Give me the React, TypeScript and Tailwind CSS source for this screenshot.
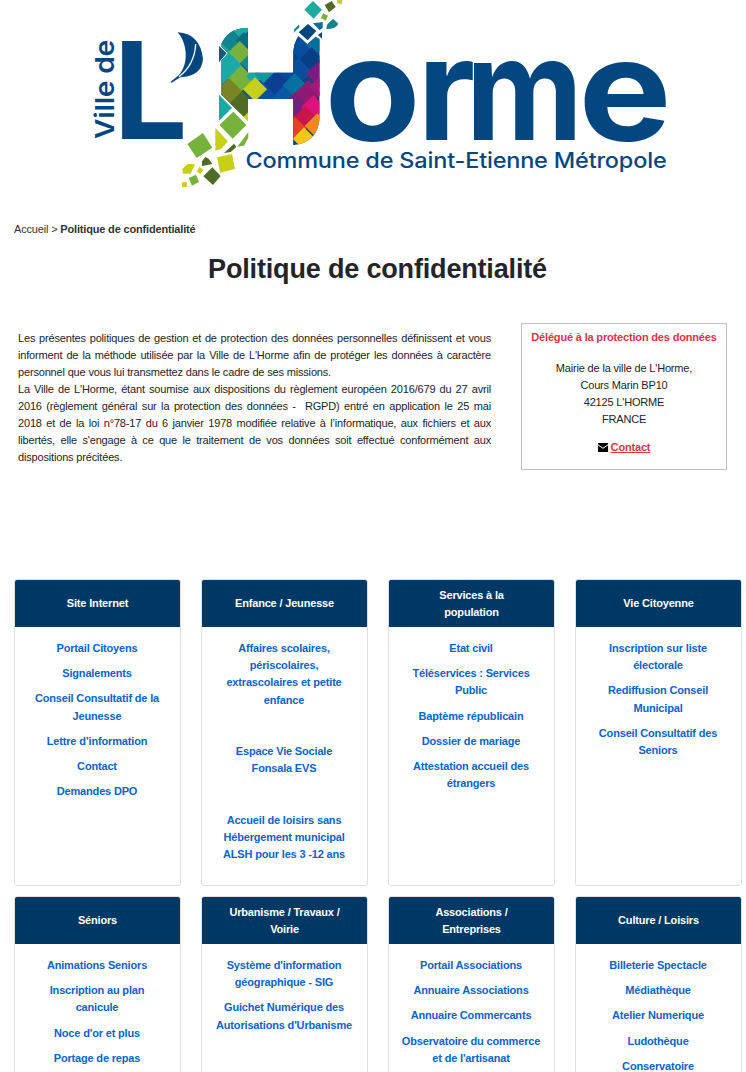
type Tile = [number, number, number, string];

const tiles: Tile[] = [
  [482, 80, 36, '#1fa9a0'],
  [448, 122, 38, '#12858f'],
  [492, 122, 26, '#0b6d7f'],
  [425, 160, 30, '#1fa9a0'],
  [508, 180, 36, '#128a94'],
  [479, 157, 34, '#77b23c'],
  [445, 196, 40, '#1aaaa3'],
  [425, 225, 30, '#1aaaa3'],
  [483, 236, 40, '#77b23c'],
  [447, 274, 40, '#7a8424'],
  [486, 314, 40, '#4f6b26'],
  [505, 358, 22, '#c5d016'],
  [524, 229, 26, '#1aaaa3'],
  [555, 222, 32, '#12969b'],
  [590, 250, 40, '#0c3f92'],
  [560, 297, 34, '#0a4f9f'],
  [525, 268, 36, '#c5d016'],
  [622, 214, 34, '#064a94'],
  [612, 290, 34, '#0a57a4'],
  [668, 145, 40, '#064f9c'],
  [708, 130, 34, '#046f9c'],
  [664, 205, 40, '#0a4d9e'],
  [695, 178, 36, '#063f86'],
  [722, 222, 44, '#7d1c80'],
  [644, 256, 36, '#0570a0'],
  [648, 316, 42, '#74207f'],
  [685, 280, 40, '#8f1a72'],
  [716, 262, 30, '#a5177a'],
  [700, 322, 36, '#e0117c'],
  [675, 354, 36, '#c9154b'],
  [645, 385, 34, '#e5431f'],
  [712, 378, 38, '#f08a1c'],
  [672, 416, 34, '#fcc51a'],
];

const shards: [string, string][] = [
  ['699,3 726,29 701,56 673,29', '#1fa9a0'],
  ['734,15 755,3 767,21 747,37', '#4f6b26'],
  ['771,0 787,0 786,13 771,9', '#c5d016'],
  ['729,40 744,47 737,62 723,54', '#77b23c'],
  ['684,72 709,93 683,121 656,97', '#044780'],
  ['657,73 658,82 641,98 643,88', '#12858f'],
  ['699,70 728,66 728,84 718,90', '#046f9c'],
  ['714,105 726,96 726,116', '#044780'],
  ['417,138 440,160 417,187', '#0b5d76'],
  ['417,284 456,324 417,362', '#1aaaa3'],
  ['460,335 499,375 458,416 418,375', '#77b23c'],
  ['406,384 444,424 424,446 406,452', '#c5d016'],
  ['369,399 397,443 350,474 322,432', '#77b23c'],
  ['505,396 505,413 492,437 472,440', '#77b23c'],
  ['462,431 469,441 452,456 432,459', '#4f6b26'],
  ['376,471 386,476 397,492 366,498 366,484', '#4f6b26'],
  ['411,472 456,462 465,507 420,518', '#c5d016'],
  ['397,502 422,528 399,555 370,529', '#4f6b26'],
  ['358,500 370,509 362,522 350,515', '#c5d016'],
  ['345,493 332,521 309,521 307,506 323,492', '#c5d016'],
  ['326,534 348,524 357,545 336,557', '#77b23c'],
  ['306,547 320,546 322,560 306,562', '#c5d016'],
];

function Logo() {
  return (
    <svg className="block h-[200px] w-[746px] shrink-0" viewBox="0 0 746 200" role="img" aria-label="Ville de L'Horme">
      <defs>
        <clipPath id="mosaic">
          <path d="M424 300V182L444 160L422 137Q442 83 504 83V218H640V158Q642 128 655 108L682 133L707 110L719 118V355Q712 430 640 435V297H504V362L424 284Z" />
        </clipPath>
      </defs>
      <g fill="#044780" className="[font-family:Inter,sans-serif]">
        <text transform="translate(113.5 139) rotate(-90)" fontSize="26" fontWeight="600" textLength="99" lengthAdjust="spacingAndGlyphs">Ville de</text>
        <text transform="translate(113.5 139) scale(.97 1)" fontSize="135" fontWeight="700">L</text>
        <text transform="translate(324.400 139.5) scale(1.105 1)" fontSize="142" fontWeight="700">o</text>
        <text transform="translate(417.5 139.500)" fontSize="142" fontWeight="700">r</text>
        <text transform="translate(466 139.5) scale(.9 1)" fontSize="142" fontWeight="700">m</text>
        <text transform="translate(578.5 139.5) scale(1.1 1)" fontSize="142" fontWeight="700">e</text>
        <text x="245.500" y="168" fontSize="21" fontWeight="450" textLength="421" lengthAdjust="spacingAndGlyphs">Commune de Saint-Etienne Métropole</text>
      </g>
      <g transform="translate(80 0) scale(.33333)">
        <path fill="#044780" d="M293 97Q360 100 369 177Q365 229 301 232L275 248L271 246L296 226C325 195 325 135 293 97Z" />
        <path d="M347 132Q344 194 297 230" fill="none" stroke="#fff" strokeWidth="4" />
        <g clipPath="url(#mosaic)">
          <rect x="415" y="70" width="230" height="380" fill="#0c55a0" />
          <rect x="638" y="70" width="90" height="380" fill="#044780" />
          {tiles.map(([x, y, r, c]) => (
            <polygon key={`${x}-${y}`} fill={c} points={`${x},${y - r} ${x + r},${y} ${x},${y + r} ${x - r},${y}`} />
          ))}
        </g>
        {shards.map(([points, c]) => (
          <polygon key={points} points={points} fill={c} />
        ))}
        <path d="M739 87Q738 70 760 57L775 71Q768 87 739 87Z" fill="#12858f" />
      </g>
    </svg>
  );
}

type Section = { title: string[]; links: string[][] };

const sections: Section[] = [
  { title: ['Site Internet'], links: [['Portail Citoyens'], ['Signalements'], ['Conseil Consultatif de la', 'Jeunesse'], ['Lettre d’information'], ['Contact'], ['Demandes DPO']] },
  { title: ['Enfance / Jeunesse'], links: [['Affaires scolaires,', 'périscolaires,', 'extrascolaires et petite', 'enfance', '', '', 'Espace Vie Sociale', 'Fonsala EVS', '', '', 'Accueil de loisirs sans', 'Hébergement municipal', 'ALSH pour les 3 -12 ans']] },
  { title: ['Services à la', 'population'], links: [['Etat civil'], ['Téléservices : Services', 'Public'], ['Baptème républicain'], ['Dossier de mariage'], ['Attestation accueil des', 'étrangers']] },
  { title: ['Vie Citoyenne'], links: [['Inscription sur liste', 'électorale'], ['Rediffusion Conseil', 'Municipal'], ['Conseil Consultatif des', 'Seniors']] },
  { title: ['Séniors'], links: [['Animations Seniors'], ['Inscription au plan', 'canicule'], ["Noce d'or et plus"], ['Portage de repas']] },
  { title: ['Urbanisme / Travaux /', 'Voirie'], links: [["Système d'information", 'géographique - SIG'], ['Guichet Numérique des', "Autorisations d'Urbanisme"]] },
  { title: ['Associations /', 'Entreprises'], links: [['Portail Associations'], ['Annuaire Associations'], ['Annuaire Commercants'], ['Observatoire du commerce', "et de l'artisanat"]] },
  { title: ['Culture / Loisirs'], links: [['Billeterie Spectacle'], ['Médiathèque'], ['Atelier Numerique'], ['Ludothèque'], ['Conservatoire']] },
];

function Lines({ lines }: { lines: string[] }) {
  return (
    <>
      {lines.map((l, i) => (
        <span key={i} className="block h-[17.17px] whitespace-nowrap">{l}</span>
      ))}
    </>
  );
}

function Card({ title, links }: Section) {
  return (
    <section className="h-[307px] overflow-hidden rounded-[3px] border border-[#dfdfdf] text-center font-bold leading-[17.17px]">
      <h2 className="flex h-[47px] flex-col justify-center bg-[#003865] pt-[0.6px] text-white">
        <Lines lines={title} />
      </h2>
      <ul className="flex flex-col gap-2 pr-px pt-[13.1px] text-[#0b63ce]">
        {links.map((l) => (
          <li key={l[0]}>
            <a href="#"><Lines lines={l} /></a>
          </li>
        ))}
      </ul>
    </section>
  );
}

export default function App() {
  return (
    <div className="flex h-[1072px] w-[746px] flex-col overflow-hidden bg-white text-[11px] leading-[17px] tracking-[-0.17px] text-[#212529] [font-family:'Liberation_Sans',Arial,sans-serif]">
      <Logo />
      <nav className="shrink-0 pl-[14px] pt-[21px] text-[#333]">
        <a href="#">Accueil</a> &gt; <b>Politique de confidentialité</b>
      </nav>
      <h1 className="mt-[14px] shrink-0 pl-[9px] text-center text-[27px] font-bold leading-[34px]">Politique de confidentialité</h1>
      <main className="mt-[37px] flex h-[256px] shrink-0 items-start">
        <div className="ml-[18px] mt-[7px] w-[473px] text-justify">
          <p>
            Les présentes politiques de gestion et de protection des données personnelles définissent et vous informent de la méthode utilisée par la Ville de L'Horme afin de protéger les données à caractère personnel que vous lui transmettez dans le cadre de ses missions.
          </p>
          <p>
            La Ville de L'Horme, étant soumise aux dispositions du règlement européen 2016/679 du 27 avril 2016 (règlement général sur la protection des données -&nbsp; RGPD) entré en application le 25 mai 2018 et de la loi n°78-17 du 6 janvier 1978 modifiée relative à l’informatique, aux fichiers et aux libertés, elle s'engage à ce que le traitement de vos données soit effectué conformément aux dispositions précitées.
          </p>
        </div>
        <aside className="ml-[30px] h-[147px] w-[206px] border border-[#bfbfbf] pt-[5px] text-center">
          <h2 className="whitespace-nowrap font-bold text-[#dc3545]">Délégué à la protection des données</h2>
          <address className="mt-[14px] not-italic">
            Mairie de la ville de L'Horme,<br />Cours Marin BP10<br />42125 L'HORME<br />FRANCE
          </address>
          <a href="#" className="mt-[11px] flex items-center justify-center gap-[3px] font-bold text-[#dc3545]">
            <svg className="h-[9px] w-[10px]" viewBox="0 0 10 9">
              <path fill="#000" d="M0 0H10V9H0Z" />
              <path d="M0 1.800L5 5.300L10 1.800" fill="none" stroke="#fff" />
            </svg>
            <span className="underline">Contact</span>
          </a>
        </aside>
      </main>
      <div className="ml-[14px] grid w-[728px] shrink-0 grid-cols-4 gap-x-5 gap-y-[10px]">
        {sections.map((s) => (
          <Card key={s.title[0]} {...s} />
        ))}
      </div>
    </div>
  );
}
